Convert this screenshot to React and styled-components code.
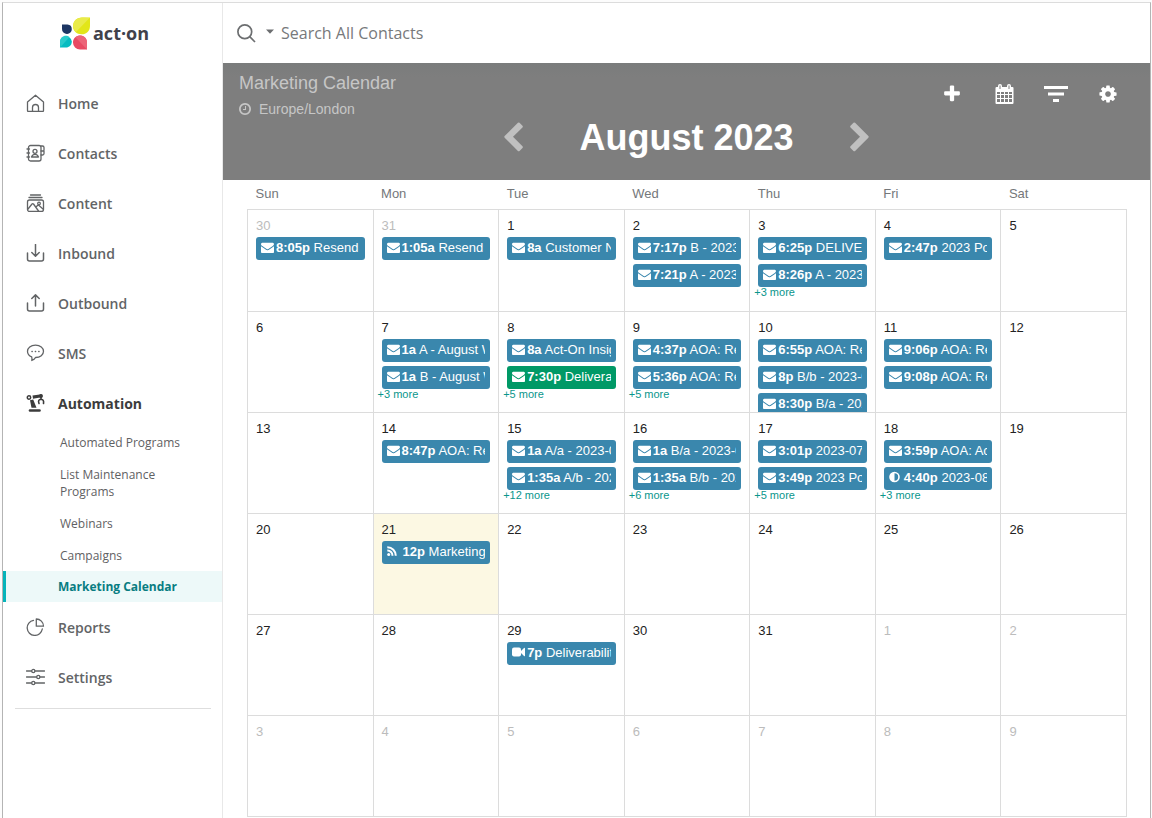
import styled, { createGlobalStyle } from "styled-components"

const GlobalStyle = createGlobalStyle`
    * {
        box-sizing: border-box;
    }
    body {
        margin: 0;
        background-color: #fff;
        font-family: "Liberation Sans", Arial, sans-serif;
    }
    ul {
        list-style: none;
        margin: 0;
        padding: 0;
    }
    a {
        text-decoration: none;
        color: inherit;
    }
    button {
        border: none;
        padding: 0;
        background: none;
        cursor: pointer;
    }
    svg {
        display: block;
        flex-shrink: 0;
    }
`

const Page = styled.div`
    padding: 2px 1px 0 2px;
    min-height: 100vh;
    display: flex;
    background-color: #fcfcfc;
`
const Frame = styled.div`
    display: flex;
    flex: 1;
    min-width: 0;
    border-top: 1px solid #dcdcdc;
    border-left: 1px solid #b4b4b4;
    border-right: 1px solid #b4b4b4;
    background-color: #fff;
`
const Sidebar = styled.aside`
    width: 220px;
    flex-shrink: 0;
    border-right: 1px solid #e8e8e8;
    font-family: "Open Sans", "Noto Sans", sans-serif;
`
const Logo = styled.a`
    display: flex;
    align-items: center;
    gap: 2px;
    height: 60px;
    padding-left: 57px;
    color: #41414b;
    font-size: 18px;
    font-weight: 700;
`
const NavList = styled.ul`
    display: flex;
    flex-direction: column;
    gap: 4px;
    padding-top: 17px;
`
const NavLink = styled.a`
    display: flex;
    align-items: center;
    gap: 13px;
    height: 46px;
    padding-left: 23px;
    font-size: 14px;
    font-weight: ${({ $open }) => ($open ? 700 : 600)};
    color: ${({ $open }) => ($open ? "#3c3c3c" : "#626466")};
`
const SubList = styled.ul`
    margin-bottom: -2px;
`
const SubLink = styled.a`
    display: block;
    padding: 8px 36px 7px 57px;
    font-size: 12px;
    line-height: 17px;
    color: #5f6163;
`
const ActiveSubLink = styled(SubLink)`
    padding: 7px 20px 7px 52px;
    border-left: 3px solid #06b4ba;
    background-color: #edf9f9;
    color: #087d82;
    font-weight: 700;
`
const Divider = styled.hr`
    margin: 8px 11px 0 12px;
    border: none;
    border-top: 1px solid #dedede;
`
const Main = styled.main`
    flex: 1;
    min-width: 0;
`
const SearchBar = styled.form`
    display: flex;
    align-items: center;
    height: 60px;
    padding: 0 14px;
    color: #6c6e70;
`
const CaretButton = styled.button`
    padding: 0 7px 4px 10px;
    color: inherit;
`
const SearchInput = styled.input`
    flex: 1;
    border: none;
    outline: none;
    padding: 0;
    background: none;
    font-family: "Open Sans", "Noto Sans", sans-serif;
    font-size: 16px;
    color: #6c6e70;
    &::placeholder {
        color: #77797b;
        opacity: 1;
    }
`
const CalendarHeader = styled.header`
    display: grid;
    grid-template-columns: 1fr auto 1fr;
    height: 117px;
    padding: 0 26px 0 16px;
    background: linear-gradient(#7a7c7c, #7e7e7e 14px);
    color: #c6c6c6;
`
const Info = styled.div`
    padding-top: 10px;
`
const Title = styled.h1`
    margin: 0;
    font-size: 18px;
    font-weight: 400;
    line-height: 20px;
`
const Zone = styled.p`
    display: flex;
    align-items: center;
    gap: 7px;
    margin: 6px 0 0 -1px;
    font-size: 14px;
    line-height: 20px;
`
const MonthBar = styled.div`
    display: flex;
    align-items: center;
    align-self: end;
    gap: 50px;
    margin-left: 10px;
    padding-bottom: 22px;
`
const MonthButton = styled.button`
    color: #c0c0c0;
`
const Month = styled.h2`
    margin: 0;
    font-size: 36px;
    line-height: 40px;
    color: #fff;
`
const Tools = styled.div`
    display: flex;
    justify-content: flex-end;
    gap: 20px;
    padding-top: 15px;
`
const ToolButton = styled.button`
    display: flex;
    align-items: center;
    justify-content: center;
    width: 32px;
    height: 32px;
    color: #fff;
`
const TableWrap = styled.section`
    padding: 0 23px 0 24px;
`
const Table = styled.table`
    width: 100%;
    table-layout: fixed;
    border-collapse: collapse;
`
const DayName = styled.th`
    height: 29px;
    padding: 0 8px;
    text-align: left;
    vertical-align: middle;
    font-size: 13px;
    font-weight: 400;
    line-height: 16px;
    color: #74777a;
`
const Week = styled.tr`
    height: 101px;
    &:first-child {
        height: 102px;
    }
`
const Cell = styled.td`
    padding: 0;
    border: 1px solid #dcdcdc;
    vertical-align: top;
    background-color: ${({ $today }) => ($today ? "#fcf8e3" : "#fff")};
`
const CellBody = styled.div`
    height: 100px;
    padding: 8px 8px 0;
    overflow: hidden;
`
const DayNumber = styled.div`
    margin-bottom: 3px;
    font-size: 13px;
    line-height: 16px;
    color: ${({ $muted }) => ($muted ? "#bcbcbc" : "#222")};
`
const Events = styled.div`
    display: flex;
    flex-direction: column;
    gap: 4px;
`
const Event = styled.a`
    display: block;
    height: 23px;
    padding: 0 5px;
    border-radius: 3px;
    background-color: ${({ $green }) => ($green ? "#009966" : "#3a87ad")};
    color: #fff;
    font-size: 13px;
    line-height: 21px;
`
const EventText = styled.span`
    display: flex;
    align-items: center;
    gap: 2px;
    overflow: hidden;
    white-space: nowrap;
`
const More = styled.a`
    display: block;
    margin-left: -4px;
    font-size: 11px;
    line-height: 11px;
    color: #0a968c;
`

const faPaths = {
    plus: "M1600 736v192q0 40-28 68t-68 28h-416v416q0 40-28 68t-68 28h-192q-40 0-68-28t-28-68v-416h-416q-40 0-68-28t-28-68v-192q0-40 28-68t68-28h416v-416q0-40 28-68t68-28h192q40 0 68 28t28 68v416h416q40 0 68 28t28 68z",
    cog: "M1152 896q0-106-75-181t-181-75-181 75-75 181 75 181 181 75 181-75 75-181zm512-109v222q0 12-8 23t-20 13l-185 28q-19 54-39 91 35 50 107 138 10 12 10 25t-9 23q-27 37-99 108t-94 71q-12 0-26-9l-138-108q-44 23-91 38-16 136-29 186-7 28-36 28h-222q-14 0-24.5-8.5t-11.5-21.5l-28-184q-49-16-90-37l-141 107q-10 9-25 9-14 0-25-11-126-114-165-168-7-10-7-23 0-12 8-23 15-21 51-66.5t54-70.5q-27-50-41-99l-183-27q-13-2-21-12.5t-8-23.5v-222q0-12 8-23t19-13l186-28q14-46 39-92-40-57-107-138-10-12-10-24 0-10 9-23 26-36 98.5-107.5t94.5-71.5q13 0 26 10l138 107q44-23 91-38 16-136 29-186 7-28 36-28h222q14 0 24.5 8.5t11.5 21.5l28 184q49 16 90 37l142-107q9-9 24-9 13 0 25 10 129 119 165 170 7 8 7 22 0 12-8 23-15 21-51 66.5t-54 70.5q26 50 41 98l183 28q13 2 21 12.5t8 23.5z",
    clock: "M1024 544v448q0 14-9 23t-23 9h-320q-14 0-23-9t-9-23v-64q0-14 9-23t23-9h224v-352q0-14 9-23t23-9h64q14 0 23 9t9 23zm416 352q0-148-73-273t-198-198-273-73-273 73-198 198-73 273 73 273 198 198 273 73 273-73 198-198 73-273zm224 0q0 209-103 385.5t-279.5 279.5-385.5 103-385.5-103-279.5-279.5-103-385.5 103-385.5 279.5-279.5 385.5-103 385.5 103 279.5 279.5 103 385.5z",
    left: "M1427 301l-531 531 531 531q19 19 19 45t-19 45l-166 166q-19 19-45 19t-45-19l-742-742q-19-19-19-45t19-45l742-742q19-19 45-19t45 19l166 166q19 19 19 45t-19 45z",
    mail: "M1792 710v794q0 66-47 113t-113 47h-1472q-66 0-113-47t-47-113v-794q44 49 101 87 362 246 497 345 57 42 92.5 65.5t94.5 48 110 24.5h2q51 0 110-24.5t94.5-48 92.5-65.5q170-123 498-345 57-39 100-87zm0-294q0 79-49 151t-122 123q-376 261-468 325-10 7-42.5 31t-54 38.5-52 32.5-57.5 27-50 9h-2q-23 0-50-9t-57.5-27-52-32.5-54-38.5-42.5-31q-91-64-262-182.5t-205-142.5q-62-42-117-115.5t-55-136.5q0-78 41.5-130t118.5-52h1472q65 0 112.5 47t47.5 113z",
}

function FaIcon({ name, size }) {
    return (
        <svg width={size} height={size} viewBox="0 0 1792 1792" fill="currentColor" aria-hidden="true">
            <path d={faPaths[name]} />
        </svg>
    )
}

function EventIcon({ type }) {
    if (type === "rss") {
        return (
            <svg width="14" height="12" viewBox="0 0 14 12" fill="none" stroke="#fff" strokeWidth="2" aria-hidden="true">
                <circle cx="1.700" cy="9.500" r="1.500" fill="#fff" stroke="none" />
                <path d="M.3 5.600a5 5 0 0 1 5.200 5.200M.3 2.300a8.400 8.400 0 0 1 8.500 8.500" />
            </svg>
        )
    }
    if (type === "video") {
        return (
            <svg width="13" height="12" viewBox="0 0 13 12" fill="#fff" aria-hidden="true">
                <rect y="1.500" width="9" height="9" rx="2" />
                <path d="M8.500 5.500L12 2q1-.6 1 .4v7.200q0 1-1 .4L8.500 6.500z" />
            </svg>
        )
    }
    if (type === "adjust") {
        return (
            <svg width="13" height="12" viewBox="0 0 13 12" fill="none" aria-hidden="true">
                <circle cx="5.500" cy="6" r="4.500" stroke="#fff" strokeWidth="1.600" />
                <path d="M5.500 1.500a4.500 4.500 0 0 0 0 9z" fill="#fff" />
            </svg>
        )
    }
    return <FaIcon name="mail" size={13} />
}

function LogoMark() {
    return (
        <svg width="31" height="33" viewBox="0 0 31 33" aria-hidden="true">
            <path d="M2 7.500h5.500a4.700 4.700 0 0 1 4.300 4.700 4.700 4.700 0 0 1-4.800 4.800A4.900 4.900 0 0 1 2 12z" fill="#1d3663" />
            <path d="M30 .5v8.500c0 5-3.500 8.300-8.500 8.300-5 0-8.500-3.300-8.500-8C13 4.500 16.500.5 22 .5z" fill="#e2e619" />
            <path d="M29.500 1L16 15c-4-4-3.800-9.500 0-12.500 2-1.600 5-2 8-2z" fill="#e9eb4a" />
            <path d="M0 30.500V24.500a6 6 0 0 1 11.800 0c0 3.600-2.500 6-6 6z" fill="#06bcc1" />
            <path d="M.3 30.200L9.500 20c-3.500-3-9.500-.8-9.500 4.500z" fill="#2acbcb" />
            <path d="M27 32.500h-7a7 7 0 0 1-7-7c0-4 3-7 7-7s7 3 7 7z" fill="#e84a63" />
            <path d="M27 32.500L15.500 20.300c4-3.500 11.500-1.600 11.500 5.200z" fill="#ec6478" />
        </svg>
    )
}

const navDrawings = {
    home: (
        <path d="M1 8L9 1.200 17 8v8.500q0 1-1 1H2q-1 0-1-1zM6 17.500v-4a3 3 0 0 1 6 0v4" />
    ),
    contacts: (
        <>
            <rect x="2" y="1.500" width="12.500" height="15.500" rx="2" />
            <path d="M14.500 2h1.500q1.500 0 1.500 1.500V6q0 1-1 1h-2M14.500 7h3v2.500q0 1.500-1.500 1.500h-1.500M.5 5H3M.5 9H3M.5 13H3" />
            <circle cx="8.500" cy="7.300" r="2" />
            <path d="M5 13q1-2.700 3.500-2.700T12 13z" />
        </>
    ),
    content: (
        <>
            <rect x="1" y="6" width="16" height="11.500" rx="2" />
            <path d="M4 1h10M2.500 3.500h13M1.500 15l4-5q.7-.7 1.500 0l5 7M9.500 13l1.500-1.500q.7-.6 1.500 0l4 3.500" />
            <circle cx="12.500" cy="9.500" r="1.300" />
        </>
    ),
    inbound: <path d="M1 9v6q0 2 2 2h12q2 0 2-2V9M9 .5v11.500M5.300 8.500L9 12.200l3.700-3.700" strokeWidth="1.500" />,
    outbound: <path d="M1 9v6q0 2 2 2h12q2 0 2-2V9M9 12V1M5.300 4.500L9 .9l3.700 3.600" strokeWidth="1.500" />,
    sms: (
        <>
            <path d="M9 1.200c4.800 0 8 2.600 8 6.100s-3.200 6.200-8 6.200q-1 2-3.700 3 .4-1.700-.1-3.600C2.600 12 1 10 1 7.300c0-3.500 3.200-6.100 8-6.100z" />
            <path d="M5.400 7.500h.4M8.800 7.500h.4M12.200 7.500h.4" />
        </>
    ),
    automation: (
        <>
            <path d="M3.500 16.500h9.500" strokeWidth="2.600" strokeLinecap="round" />
            <path d="M5 13.800h5l-3.300-8.300-3.200.8zM6 1.500L15 .2v3L6.500 4.800z" fill="currentColor" stroke="none" />
            <circle cx="2.500" cy="3.500" r="1.700" strokeWidth="1.500" />
            <path d="M14.500 3v2M12.500 9.500q-1.500-3.800 2-4.300 3.200.1 2.500 4.300" strokeWidth="1.600" />
            <circle cx="14.500" cy="2" r="1.300" fill="currentColor" />
        </>
    ),
    reports: (
        <path d="M7 2.300A7.600 7.600 0 1 0 15.800 11M9.800 1v7.200H17A7.200 7.200 0 0 0 9.800 1z" />
    ),
    settings: (
        <>
            <path d="M0 3h5M8.500 3H18M0 9h10M13.500 9H18M0 15h5M8.500 15H18" strokeWidth="1.500" />
            <circle cx="6.800" cy="3" r="1.600" />
            <circle cx="11.800" cy="9" r="1.600" />
            <circle cx="6.800" cy="15" r="1.600" />
        </>
    ),
}

function NavIcon({ name }) {
    return (
        <svg width="19" height="18" viewBox="0 0 18 18" fill="none" stroke="currentColor" strokeWidth="1.300" strokeLinecap="round" strokeLinejoin="round" aria-hidden="true">
            {navDrawings[name]}
        </svg>
    )
}

const navItems = [
    { icon: "home", label: "Home" },
    { icon: "contacts", label: "Contacts" },
    { icon: "content", label: "Content" },
    { icon: "inbound", label: "Inbound" },
    { icon: "outbound", label: "Outbound" },
    { icon: "sms", label: "SMS" },
    {
        icon: "automation",
        label: "Automation",
        children: ["Automated Programs", "List Maintenance Programs", "Webinars", "Campaigns", "Marketing Calendar"],
    },
    { icon: "reports", label: "Reports" },
    { icon: "settings", label: "Settings" },
]

const dayNames = ["Sun", "Mon", "Tue", "Wed", "Thu", "Fri", "Sat"]

const weeks = [
    [
        { day: 30, muted: true, events: [["8:05p", "Resend"]] },
        { day: 31, muted: true, events: [["1:05a", "Resend"]] },
        { day: 1, events: [["8a", "Customer N"]] },
        { day: 2, events: [["7:17p", "B - 2023"], ["7:21p", "A - 2023"]] },
        { day: 3, events: [["6:25p", "DELIVER"], ["8:26p", "A - 2023"]], more: 3 },
        { day: 4, events: [["2:47p", "2023 Po"]] },
        { day: 5 },
    ],
    [
        { day: 6 },
        { day: 7, events: [["1a", "A - August W"], ["1a", "B - August W"]], more: 3 },
        { day: 8, events: [["8a", "Act-On Insig"], ["7:30p", "Delivera", "mail", true]], more: 5 },
        { day: 9, events: [["4:37p", "AOA: Re"], ["5:36p", "AOA: Re"]], more: 5 },
        { day: 10, events: [["6:55p", "AOA: Re"], ["8p", "B/b - 2023-0"], ["8:30p", "B/a - 202"]] },
        { day: 11, events: [["9:06p", "AOA: Re"], ["9:08p", "AOA: Re"]] },
        { day: 12 },
    ],
    [
        { day: 13 },
        { day: 14, events: [["8:47p", "AOA: Re"]] },
        { day: 15, events: [["1a", "A/a - 2023-0"], ["1:35a", "A/b - 202"]], more: 12 },
        { day: 16, events: [["1a", "B/a - 2023-0"], ["1:35a", "B/b - 202"]], more: 6 },
        { day: 17, events: [["3:01p", "2023-07"], ["3:49p", "2023 Po"]], more: 5 },
        { day: 18, events: [["3:59p", "AOA: Ac"], ["4:40p", "2023-08", "adjust"]], more: 3 },
        { day: 19 },
    ],
    [
        { day: 20 },
        { day: 21, today: true, events: [["12p", "Marketing", "rss"]] },
        { day: 22 },
        { day: 23 },
        { day: 24 },
        { day: 25 },
        { day: 26 },
    ],
    [
        { day: 27 },
        { day: 28 },
        { day: 29, events: [["7p", "Deliverabilit", "video"]] },
        { day: 30 },
        { day: 31 },
        { day: 1, muted: true },
        { day: 2, muted: true },
    ],
    [3, 4, 5, 6, 7, 8, 9].map((day) => ({ day, muted: true })),
]

function DayCell({ day, muted, today, events = [], more }) {
    return (
        <Cell $today={today}>
            <CellBody>
                <DayNumber $muted={muted}>{day}</DayNumber>
                <Events>
                    {events.map(([time, title, type, green]) => (
                        <Event href="#" key={time + title} $green={green}>
                            <EventText>
                                <EventIcon type={type} />
                                <span>
                                    <b>{time}</b> {title}
                                </span>
                            </EventText>
                        </Event>
                    ))}
                </Events>
                {more && <More href="#">+{more} more</More>}
            </CellBody>
        </Cell>
    )
}

function SideMenu() {
    return (
        <Sidebar>
            <Logo href="#">
                <LogoMark />
                <span>act·on</span>
            </Logo>
            <nav>
                <NavList>
                    {navItems.map(({ icon, label, children }) => (
                        <li key={label}>
                            <NavLink href="#" $open={Boolean(children)}>
                                <NavIcon name={icon} />
                                {label}
                            </NavLink>
                            {children && (
                                <SubList>
                                    {children.map((child) => {
                                        const Link = child === "Marketing Calendar" ? ActiveSubLink : SubLink
                                        return (
                                            <li key={child}>
                                                <Link href="#">{child}</Link>
                                            </li>
                                        )
                                    })}
                                </SubList>
                            )}
                        </li>
                    ))}
                </NavList>
            </nav>
            <Divider />
        </Sidebar>
    )
}

function App() {
    return (
        <Page>
            <GlobalStyle />
            <Frame>
                <SideMenu />
                <Main>
                    <SearchBar role="search">
                        <svg width="19" height="19" viewBox="0 0 19 19" fill="none" stroke="currentColor" strokeWidth="1.700" aria-hidden="true">
                            <circle cx="7.800" cy="7.800" r="6.900" />
                            <path d="M12.700 12.700l5.300 5.300" />
                        </svg>
                        <CaretButton type="button" aria-label="Search options">
                            <svg width="8" height="5" viewBox="0 0 8 5" fill="currentColor" aria-hidden="true">
                                <path d="M0 .5h8L4 4.800z" />
                            </svg>
                        </CaretButton>
                        <SearchInput type="text" aria-label="Search All Contacts" placeholder="Search All Contacts" />
                    </SearchBar>
                    <CalendarHeader>
                        <Info>
                            <Title>Marketing Calendar</Title>
                            <Zone>
                                <FaIcon name="clock" size={14} />
                                Europe/London
                            </Zone>
                        </Info>
                        <MonthBar>
                            <MonthButton aria-label="Previous month">
                                <FaIcon name="left" size={32} />
                            </MonthButton>
                            <Month>August 2023</Month>
                            <MonthButton aria-label="Next month">
                                <svg width="32" height="32" viewBox="0 0 1792 1792" fill="currentColor" aria-hidden="true">
                                    <path d={faPaths.left} transform="translate(1792 0) scale(-1 1)" />
                                </svg>
                            </MonthButton>
                        </MonthBar>
                        <Tools>
                            <ToolButton aria-label="Add">
                                <FaIcon name="plus" size={20} />
                            </ToolButton>
                            <ToolButton aria-label="Choose date">
                                <svg width="19" height="20" viewBox="0 0 19 20" aria-hidden="true">
                                    <path fill="currentColor" fillRule="evenodd" d="M1.500 3H3V2q0-2 2-2t2 2v1h5V2q0-2 2-2t2 2v1h1.500q1 0 1 1v15q0 1-1 1h-16q-1 0-1-1V4q0-1 1-1zM4.500 1.500V5h1V1.500zM13.500 1.500V5h1V1.500zM2 8v2h3V8zM6 8v2h3V8zM10 8v2h3V8zM14 8v2h3V8zM2 11v3h3v-3zM6 11v3h3v-3zM10 11v3h3v-3zM14 11v3h3v-3zM2 15v3h3v-3zM6 15v3h3v-3zM10 15v3h3v-3zM14 15v3h3v-3z" />
                                </svg>
                            </ToolButton>
                            <ToolButton aria-label="Filter">
                                <svg width="24" height="16" viewBox="0 0 24 16" fill="currentColor" aria-hidden="true">
                                    <path d="M0 0h24v3H0zM4 6.500h16v3H4zM9 13h6v3H9z" />
                                </svg>
                            </ToolButton>
                            <ToolButton aria-label="Settings">
                                <FaIcon name="cog" size={20} />
                            </ToolButton>
                        </Tools>
                    </CalendarHeader>
                    <TableWrap>
                        <Table>
                            <thead>
                                <tr>
                                    {dayNames.map((name) => (
                                        <DayName key={name} scope="col">{name}</DayName>
                                    ))}
                                </tr>
                            </thead>
                            <tbody>
                                {weeks.map((week, i) => (
                                    <Week key={i}>
                                        {week.map((cell) => (
                                            <DayCell key={cell.day} {...cell} />
                                        ))}
                                    </Week>
                                ))}
                            </tbody>
                        </Table>
                    </TableWrap>
                </Main>
            </Frame>
        </Page>
    )
}

export default App
